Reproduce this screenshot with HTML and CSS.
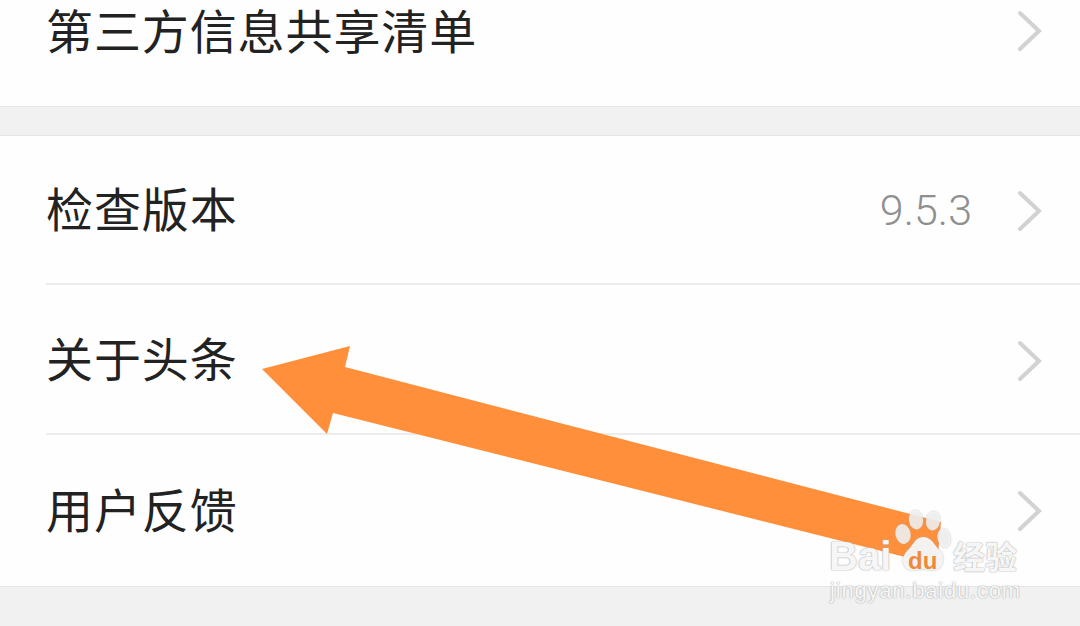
FILE: index.html
```html
<!DOCTYPE html>
<html lang="zh">
<head>
<meta charset="utf-8">
<title>设置</title>
<link rel="stylesheet" href="styles.css">
</head>
<body>
<main class="page">
  <section class="group group-first">
    <div class="row row-first">
      <span class="label">第三方信息共享清单</span>
      <svg class="chev" viewBox="0 0 26 42"><path d="M3 3 L22 21 L3 39"/></svg>
    </div>
  </section>
  <section class="group">
    <div class="row row-a">
      <span class="label">检查版本</span>
      <span class="value">9.5.3</span>
      <svg class="chev" viewBox="0 0 26 42"><path d="M3 3 L22 21 L3 39"/></svg>
    </div>
    <div class="row row-b">
      <span class="label">关于头条</span>
      <svg class="chev" viewBox="0 0 26 42"><path d="M3 3 L22 21 L3 39"/></svg>
    </div>
    <div class="row row-c">
      <span class="label">用户反馈</span>
      <svg class="chev" viewBox="0 0 26 42"><path d="M3 3 L22 21 L3 39"/></svg>
    </div>
  </section>
</main>
<svg class="arrow" viewBox="0 0 1080 626">
  <polygon points="262,369 350,346 345,367 941,522 937,565 333,413 327,434"/>
</svg>
<div class="mark">
  <div class="mark-top">
    <span class="mark-bai">Bai</span>
    <svg class="paw" viewBox="0 0 62 62">
      <g class="paw-toes">
        <ellipse cx="8" cy="24" rx="7.5" ry="10" transform="rotate(-12 8 24)"/>
        <ellipse cx="21" cy="10" rx="7" ry="9.5" transform="rotate(-8 21 10)"/>
        <ellipse cx="38" cy="11" rx="7" ry="9.5" transform="rotate(8 38 11)"/>
        <ellipse cx="49" cy="28" rx="6.5" ry="9.5" transform="rotate(-12 49 28)"/>
      </g>
      <path class="paw-pad" d="M28 27 C36 27 39 34 44 40 C52 48 47 61 37 60 C31 59 25 59 19 60 C9 61 4 50 12 41 C18 36 20 27 28 27 Z"/>
    </svg>
    <span class="mark-du">du</span>
    <span class="mark-cn">经验</span>
  </div>
  <div class="mark-url">jingyan.baidu.com</div>
</div>
</body>
</html>
```
FILE: styles.css
```css
html, body {
  margin: 0;
  padding: 0;
}
body {
  width: 1080px;
  height: 626px;
  overflow: hidden;
  position: relative;
  background: #f1f1f1;
  font-family: "Noto Sans CJK SC", "Noto Sans", sans-serif;
}
.page {
  display: flex;
  flex-direction: column;
  gap: 28px;
}
.group {
  background: #fefefe;
  border-top: 1px solid #e4e4e4;
  border-bottom: 1px solid #e4e4e4;
  padding-left: 46px;
}
.group-first {
  border-top: 0;
  height: 106px;
}
.group-first .row-first {
  height: 62px;
  border-bottom: 0;
}
.row {
  display: flex;
  align-items: center;
  padding-right: 37px;
  border-bottom: 2px solid #ececec;
  box-sizing: border-box;
}
.row-a { height: 149px; }
.row-b { height: 150px; }
.row-c { height: 151px; border-bottom: 0; }
.row-a .chev { margin-top: 2px; }
.row-b .chev { margin-top: 4px; }
.label {
  flex: 1;
  font-size: 47px;
  line-height: 52px;
  margin-bottom: 5px;
  color: #222222;
  letter-spacing: 0.9px;
}
.value {
  font-family: Roboto, "Noto Sans", sans-serif;
  font-weight: 300;
  font-size: 43px;
  line-height: 50px;
  color: #8f8f8f;
  margin-right: 45px;
}
.chev {
  width: 26px;
  height: 42px;
}
.chev path {
  fill: none;
  stroke: #d2d2d2;
  stroke-width: 4;
  stroke-linecap: round;
  stroke-linejoin: miter;
}
.arrow {
  position: absolute;
  left: 0;
  top: 0;
  width: 1080px;
  height: 626px;
}
.arrow polygon {
  fill: #ff8f3b;
}
.mark {
  position: absolute;
  left: 829px;
  top: 510px;
  width: 200px;
  color: rgba(255, 255, 255, 0.92);
  text-shadow: 0 0 1px #a8a8a8, 0 0 2px #b8b8b8;
}
.mark-top {
  position: relative;
  height: 68px;
}
.mark-bai {
  position: absolute;
  left: 0;
  top: 24px;
  font-family: "Liberation Sans", sans-serif;
  font-weight: 700;
  font-size: 40px;
  line-height: 44px;
}
.paw {
  position: absolute;
  left: 66px;
  top: 0;
  width: 62px;
  height: 62px;
  filter: drop-shadow(0 0 1px #aaaaaa);
}
.paw-toes { fill: rgba(255, 255, 255, 0.72); }
.paw-pad { fill: rgba(255, 255, 255, 0.85); }
.mark-du {
  position: absolute;
  left: 79px;
  top: 38px;
  font-family: "Liberation Sans", sans-serif;
  font-weight: 700;
  font-size: 24px;
  line-height: 26px;
  color: #f08a3a;
  text-shadow: none;
}
.mark-cn {
  position: absolute;
  left: 124px;
  top: 25px;
  font-size: 32px;
  line-height: 40px;
  font-weight: 700;
  white-space: nowrap;
}
.mark-url {
  padding-left: 1px;
  font-family: "Liberation Sans", sans-serif;
  font-size: 22px;
  line-height: 26px;
  white-space: nowrap;
  letter-spacing: 0.8px;
}
```
